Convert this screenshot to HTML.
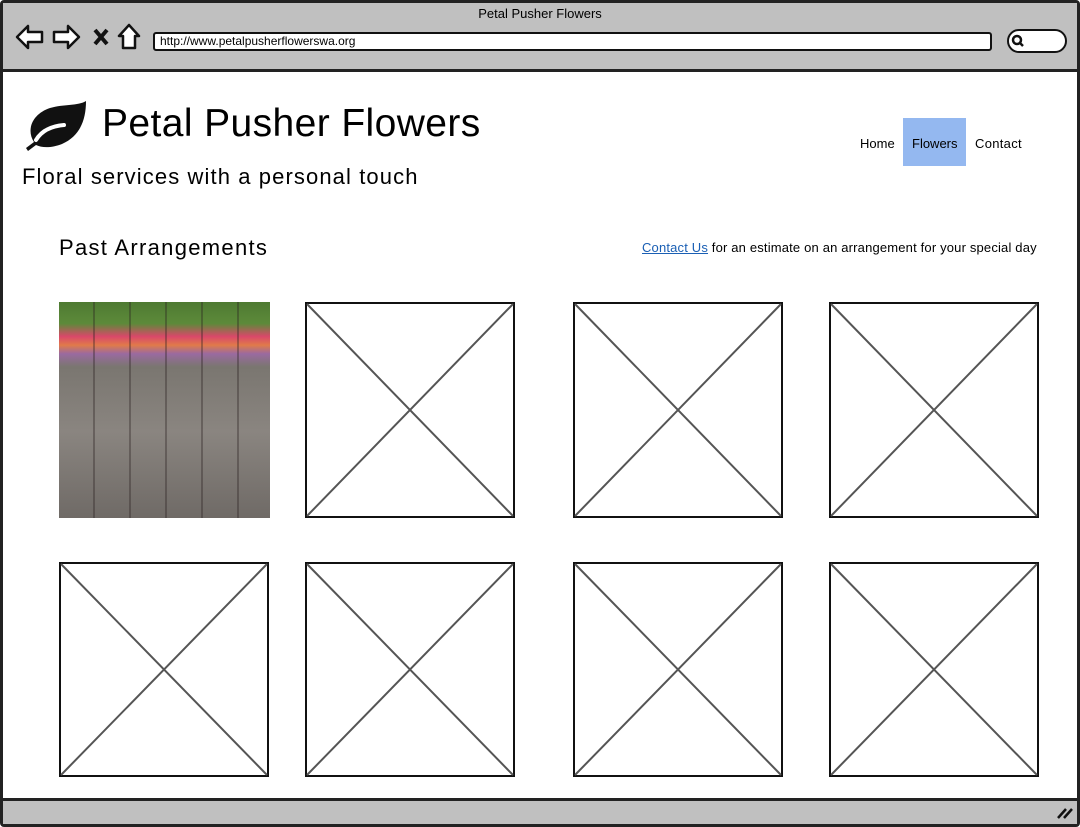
<!DOCTYPE html>
<html><head><style>
*{margin:0;padding:0;box-sizing:border-box}
body{width:1080px;height:827px;position:relative;background:#fff;font-family:"Liberation Sans",sans-serif;color:#000;overflow:hidden}
.abs{position:absolute}
</style></head><body>
<div class="abs" style="left:0;top:0;width:1080px;height:827px;border:3px solid #222;border-radius:4px"></div>
<div class="abs" style="left:3px;top:3px;width:1074px;height:69px;background:#c0c0c0;border-bottom:3px solid #222"></div>
<div class="abs" style="left:0;top:6px;width:1080px;text-align:center;font-size:13px">Petal Pusher Flowers</div>
<svg class="abs" style="left:14px;top:22px" width="130" height="30" viewBox="0 0 130 30">
<path d="M3 15 L14 4 L14 10 L28 10 L28 20 L14 20 L14 26 Z" fill="#fff" stroke="#111" stroke-width="2.5" stroke-linejoin="round"/>
<path d="M79 15 L68 4 L68 10 L54 10 L54 20 L68 20 L68 26 Z" transform="translate(-14 0)" fill="#fff" stroke="#111" stroke-width="2.5" stroke-linejoin="round"/>
<path d="M81 8 L93 22 M93 8 L81 22" stroke="#111" stroke-width="4"/>
<path d="M115 3 L105 14 L109 14 L109 26 L121 26 L121 14 L125 14 Z" fill="#fff" stroke="#111" stroke-width="2.5" stroke-linejoin="round"/>
</svg>
<div class="abs" style="left:153px;top:32px;width:839px;height:19px;background:#fff;border:2.5px solid #111;border-radius:3px;font-size:12px;line-height:14px;padding-left:5px">http://www.petalpusherflowerswa.org</div>
<div class="abs" style="left:1007px;top:29px;width:60px;height:24px;background:#fff;border:2.5px solid #111;border-radius:12px"></div>
<svg class="abs" style="left:1011px;top:34px" width="14" height="14"><circle cx="6" cy="6" r="4" fill="none" stroke="#111" stroke-width="2.5"/><path d="M9 9 L12 12" stroke="#111" stroke-width="2.5"/></svg>
<div class="abs" style="left:3px;top:798px;width:1074px;height:26px;background:#c0c0c0;border-top:3px solid #222"></div>
<svg class="abs" style="left:1056px;top:806px" width="18" height="14"><path d="M2 12 L10 3 M8 12 L16 3" stroke="#111" stroke-width="2.5"/></svg>

<svg class="abs" style="left:22px;top:100px" width="66" height="52" viewBox="0 0 66 52">
<path d="M4 48 L12 42 C4 30 10 14 28 8 C42 4 56 6 64 1 C64 20 58 36 40 44 C30 48 20 48 14 45 L6 51 Z" fill="#111"/>
<path d="M14 40 C20 30 30 26 42 25" stroke="#fff" stroke-width="4" fill="none" stroke-linecap="round"/>
</svg>
<div class="abs" style="left:102px;top:102px;font-size:39px;letter-spacing:0.4px">Petal Pusher Flowers</div>
<div class="abs" style="left:22px;top:164px;font-size:22px;letter-spacing:1.1px">Floral services with a personal touch</div>
<div class="abs" style="left:860px;top:136px;font-size:13px">Home</div>
<div class="abs" style="left:903px;top:118px;width:63px;height:48px;background:#94b8f0"></div>
<div class="abs" style="left:912px;top:136px;font-size:13px">Flowers</div>
<div class="abs" style="left:975px;top:136px;font-size:13px;letter-spacing:0.3px">Contact</div>
<div class="abs" style="left:59px;top:235px;font-size:22px;letter-spacing:1.3px">Past Arrangements</div>
<div class="abs" style="left:642px;top:240px;font-size:13px;letter-spacing:0.17px"><span style="color:#1a5fb4;text-decoration:underline">Contact Us</span> for an estimate on an arrangement for your special day</div>

<div class="abs" style="left:59px;top:302px;width:211px;height:216px;background:linear-gradient(180deg,#4e7a32 0,#5d8a3a 10%,#d9486a 16%,#e07a4a 20%,#9a6aa0 24%,#7a7670 30%,#8a8580 60%,#6f6a66 100%)"></div>
<div class="abs" style="left:59px;top:302px;width:211px;height:216px;background:repeating-linear-gradient(90deg,rgba(0,0,0,0) 0 34px,rgba(40,30,30,.35) 34px 36px);"></div>

<svg class="abs" style="left:0;top:0" width="1080" height="827">
<g fill="#fff" stroke="#111" stroke-width="2">
<rect x="306" y="303" width="208" height="214"/><rect x="574" y="303" width="208" height="214"/><rect x="830" y="303" width="208" height="214"/>
<rect x="60" y="563" width="208" height="213"/><rect x="306" y="563" width="208" height="213"/><rect x="574" y="563" width="208" height="213"/><rect x="830" y="563" width="208" height="213"/>
</g>
<g stroke="#555" stroke-width="2">
<path d="M307 304 L513 516 M513 304 L307 516"/>
<path d="M575 304 L781 516 M781 304 L575 516"/>
<path d="M831 304 L1037 516 M1037 304 L831 516"/>
<path d="M61 564 L267 775 M267 564 L61 775"/>
<path d="M307 564 L513 775 M513 564 L307 775"/>
<path d="M575 564 L781 775 M781 564 L575 775"/>
<path d="M831 564 L1037 775 M1037 564 L831 775"/>
</g>
</svg>
</body></html>
